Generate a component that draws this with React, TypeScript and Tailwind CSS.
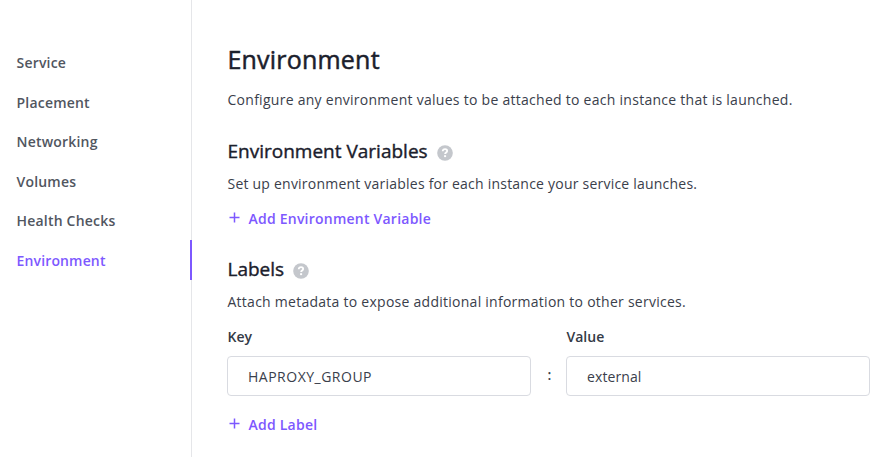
import React from "react";

const navItems = ["Service", "Placement", "Networking", "Volumes", "Health Checks", "Environment"];

function HelpIcon() {
  return (
    <svg className="mt-[3px] ml-[9.5px] size-4 shrink-0" viewBox="0 0 16 16" fill="none">
      <circle cx="8" cy="8" r="7.8" fill="#c4c7cc" />
      <path d="M5.7 6.3C5.8 5 6.8 4.2 8.05 4.2c1.25 0 2.1.75 2.1 1.8 0 1.5-2.05 1.6-2.05 3.1" stroke="#fff" strokeWidth="1.8" />
      <rect x="7.1" y="10.2" width="2" height="1.9" fill="#fff" />
    </svg>
  );
}

function AddButton({ label }: { label: string }) {
  return (
    <button className="flex h-5 items-center text-[14px] leading-5 font-semibold tracking-[0.23px] whitespace-nowrap text-[#7d58ff]">
      <svg className="mr-[8.5px] ml-[2px] -mt-[3px] size-[11px]" viewBox="0 0 11 11" stroke="currentColor" strokeWidth="1.5">
        <path d="M5.5 .5v10M.5 5.5h10" />
      </svg>
      {label}
    </button>
  );
}

function Field({ label, value }: { label: string; value: string }) {
  return (
    <div className="w-[304px]">
      <label className="block h-5 pl-[0.5px] text-[14px] leading-5 font-semibold text-[#343a46]">{label}</label>
      <div className="mt-[9px] flex h-10 items-center rounded-[4px] border border-[#d9dbe1] px-5 text-[14px] text-[#3a404b]">
        <span className={value === "external" ? "tracking-[0.1px]" : "tracking-[0.5px]"}>{value}</span>
      </div>
    </div>
  );
}

export default function App() {
  return (
    <div className="flex h-[457px] w-[894px] overflow-hidden bg-white font-['Open_Sans','Noto_Sans',sans-serif] text-[#3a404b]">
      <nav className="flex w-[192px] shrink-0 flex-col border-r border-[#e5e6e9] pt-[43px]">
        {navItems.map((item) => (
          <a
            key={item}
            className={
              item === "Environment"
                ? "-mt-[0.5px] -mr-px flex h-10 items-center border-r-2 border-[#7d58ff] pl-[16.5px] text-[14px] font-semibold tracking-[0.15px] text-[#7d58ff]"
                : "flex h-[39.5px] items-center pl-[16.5px] text-[14px] font-semibold tracking-[0.2px] text-[#51565f]"
            }
          >
            {item}
          </a>
        ))}
      </nav>
      <main className="flex flex-1 flex-col pl-[35px]">
        <h1 className="mt-[41px] h-9 pl-[0.5px] text-[25px] leading-9 font-normal tracking-[0.2px] whitespace-nowrap text-[#1b202c] [-webkit-text-stroke:0.5px_#1b202c]">Environment</h1>
        <p className="mt-[13px] h-5 pl-[0.5px] text-[14px] leading-5 tracking-[0.27px] whitespace-nowrap">
          Configure any environment values to be attached to each instance that is launched.
        </p>
        <div className="mt-[27px] flex h-7 items-center pl-[0.5px]">
          <h2 className="text-[19px] leading-7 font-normal whitespace-nowrap text-[#1b202c] [-webkit-text-stroke:0.4px_#1b202c]">Environment Variables</h2>
          <HelpIcon />
        </div>
        <p className="mt-[9px] h-5 pl-[0.5px] text-[14px] leading-5 tracking-[0.22px] whitespace-nowrap">
          Set up environment variables for each instance your service launches.
        </p>
        <div className="mt-[15px]"><AddButton label="Add Environment Variable" /></div>
        <div className="mt-[26px] flex h-7 items-center pl-[0.5px]">
          <h2 className="-mr-px text-[19px] leading-7 font-normal whitespace-nowrap text-[#1b202c] [-webkit-text-stroke:0.4px_#1b202c]">Labels</h2>
          <HelpIcon />
        </div>
        <p className="mt-[9px] h-5 pl-[0.5px] text-[14px] leading-5 tracking-[0.26px] whitespace-nowrap">
          Attach metadata to expose additional information to other services.
        </p>
        <div className="mt-[15px] flex">
          <Field label="Key" value="HAPROXY_GROUP" />
          <div className="w-[35px] pt-[38px] pl-[2px] text-center text-[14px] leading-5 font-semibold">:</div>
          <Field label="Value" value="external" />
        </div>
        <div className="mt-[19px]"><AddButton label="Add Label" /></div>
      </main>
    </div>
  );
}
